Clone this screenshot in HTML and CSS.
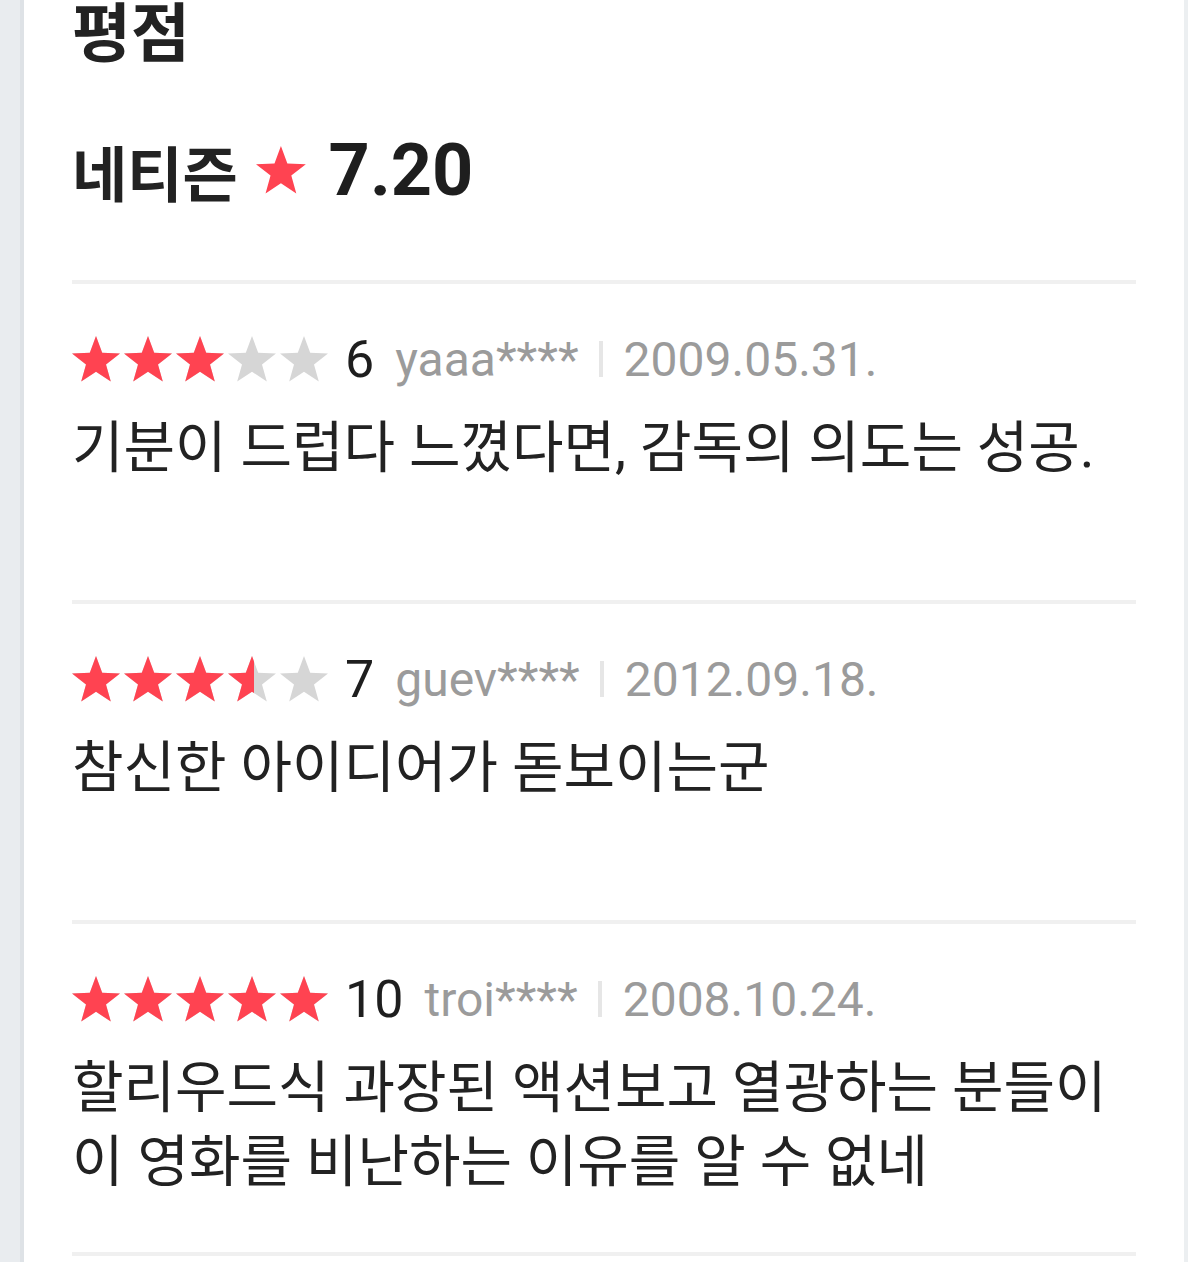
FILE: index.html
```html
<!DOCTYPE html>
<html lang="ko">
<head>
  <meta charset="UTF-8">
  <meta name="viewport" content="width=device-width, initial-scale=1.0">
  <title>평점</title>
  <link rel="stylesheet" href="styles.css">
</head>
<body>
  <svg class="defs" width="0" height="0" aria-hidden="true">
    <symbol id="star" viewBox="0 0 52 46">
      <polygon points="24,0 30.2,16.7 48,17.4 34,28.4 38.8,45.6 24,35.7 9.2,45.6 14,28.4 0,17.4 17.8,16.7"/>
    </symbol>
  </svg>

  <div class="page">
    <div class="gutter"></div>
    <div class="card">
      <h2 class="title">평점</h2>
      <div class="netizen">
        <span class="netizen-label">네티즌</span>
        <svg class="big-star" viewBox="0 0 52 46"><use href="#star"/></svg>
        <span class="netizen-score">7.20</span>
      </div>

      <ul class="reviews">
        <li class="review">
          <div class="meta">
            <div class="stars">
              <div class="stars-off">
                <svg><use href="#star"/></svg><svg><use href="#star"/></svg><svg><use href="#star"/></svg><svg><use href="#star"/></svg><svg><use href="#star"/></svg>
              </div>
              <div class="stars-on" style="width: 60%">
                <svg><use href="#star"/></svg><svg><use href="#star"/></svg><svg><use href="#star"/></svg><svg><use href="#star"/></svg><svg><use href="#star"/></svg>
              </div>
            </div>
            <span class="score">6</span>
            <span class="user">yaaa****</span>
            <span class="bar"></span>
            <span class="date">2009.05.31.</span>
          </div>
          <p class="text">기분이 드럽다 느꼈다면, 감독의 의도는 성공.</p>
        </li>
        <li class="review">
          <div class="meta">
            <div class="stars">
              <div class="stars-off">
                <svg><use href="#star"/></svg><svg><use href="#star"/></svg><svg><use href="#star"/></svg><svg><use href="#star"/></svg><svg><use href="#star"/></svg>
              </div>
              <div class="stars-on" style="width: 70%">
                <svg><use href="#star"/></svg><svg><use href="#star"/></svg><svg><use href="#star"/></svg><svg><use href="#star"/></svg><svg><use href="#star"/></svg>
              </div>
            </div>
            <span class="score">7</span>
            <span class="user">guev****</span>
            <span class="bar"></span>
            <span class="date">2012.09.18.</span>
          </div>
          <p class="text">참신한 아이디어가 돋보이는군</p>
        </li>
        <li class="review">
          <div class="meta">
            <div class="stars">
              <div class="stars-off">
                <svg><use href="#star"/></svg><svg><use href="#star"/></svg><svg><use href="#star"/></svg><svg><use href="#star"/></svg><svg><use href="#star"/></svg>
              </div>
              <div class="stars-on" style="width: 100%">
                <svg><use href="#star"/></svg><svg><use href="#star"/></svg><svg><use href="#star"/></svg><svg><use href="#star"/></svg><svg><use href="#star"/></svg>
              </div>
            </div>
            <span class="score">10</span>
            <span class="user">troi****</span>
            <span class="bar"></span>
            <span class="date">2008.10.24.</span>
          </div>
          <p class="text">할리우드식 과장된 액션보고 열광하는 분들이 이 영화를 비난하는 이유를 알 수 없네</p>
        </li>
      </ul>
    </div>
  </div>
</body>
</html>
```

FILE: styles.css
```css
:root {
  --red: #ff4351;
  --star-off: #d6d6d6;
  --text: #222;
  --muted: #9b9b9b;
  --line: #f0f0f0;
}
* { box-sizing: border-box; }
body {
  margin: 0;
  background: #fff;
  color: var(--text);
  font-family: Roboto, "Noto Sans CJK KR", sans-serif;
  overflow: hidden;
}
.defs { position: absolute; }
.page { display: flex; min-height: 1262px; }
.gutter {
  width: 24px; flex-shrink: 0;
  background: #e9ecef; border-right: 4px solid #dee2e6;
}
.card {
  width: 1164px; padding: 0 48px;
  border-right: 4px solid #eceff1;
}
.title {
  margin: 3px 0 0; font-size: 64px; line-height: 64px; font-weight: 700;
}
.netizen {
  display: flex; align-items: center; height: 80px;
  margin-top: 63px; font-weight: 700;
}
.netizen-label { font-size: 60px; }
.big-star { width: 54px; height: 48px; margin: 0 19px 0 18px; fill: var(--red); }
.netizen-score { font-size: 72px; color: #1e1e1e; }

.reviews { list-style: none; margin: 70px 0 0; padding: 0; }
.review {
  border-top: 4px solid var(--line);
  padding: 45px 0 53px;
}
.review:last-child { border-bottom: 4px solid var(--line); }
.meta { display: flex; align-items: center; height: 60px; }
.stars { position: relative; width: 260px; height: 46px; }
.stars-off, .stars-on { display: flex; height: 46px; }
.stars-off { fill: var(--star-off); }
.stars-on {
  position: absolute; top: 0; left: 0;
  overflow: hidden; fill: var(--red);
}
.stars svg { width: 52px; height: 46px; flex-shrink: 0; }
.score { margin-left: 13px; font-size: 52px; color: #1e1e1e; }
.user { margin-left: 21px; font-size: 48px; color: var(--muted); }
.bar {
  width: 4px; height: 36px; margin: 0 21px 0 20px;
  background: #e6e6e6;
}
.date { font-size: 48px; color: var(--muted); }
.text {
  margin: 22px 0 0; min-height: 136px;
  font-size: 56px; line-height: 74px; color: var(--text);
}
```
